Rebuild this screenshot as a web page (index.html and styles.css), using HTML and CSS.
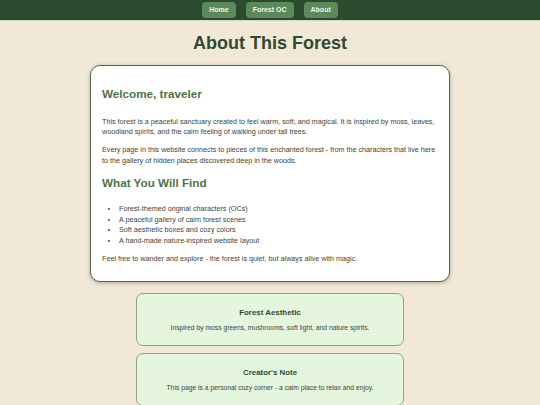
FILE: index.html
```html
<!DOCTYPE html>
<html lang="en">
<head>
<meta charset="utf-8">
<title>About This Forest</title>
<link rel="stylesheet" href="styles.css">
</head>
<body>
<nav class="topnav">
  <a class="navbtn" href="#">Home</a>
  <a class="navbtn" href="#">Forest OC</a>
  <a class="navbtn" href="#">About</a>
</nav>
<h1 class="page-title">About This Forest</h1>
<main class="main-card">
  <h2 class="section-title section-title-first">Welcome, traveler</h2>
  <p>This forest is a peaceful sanctuary created to feel warm, soft, and magical. It is inspired by moss, leaves, woodland spirits, and the calm feeling of walking under tall trees.</p>
  <p>Every page in this website connects to pieces of this enchanted forest - from the characters that live here to the gallery of hidden places discovered deep in the woods.</p>
  <h2 class="section-title">What You Will Find</h2>
  <ul class="find-list">
    <li>Forest-themed original characters (OCs)</li>
    <li>A peaceful gallery of calm forest scenes</li>
    <li>Soft aesthetic boxes and cozy colors</li>
    <li>A hand-made nature-inspired website layout</li>
  </ul>
  <p>Feel free to wander and explore - the forest is quiet, but always alive with magic.</p>
</main>
<section class="note-card">
  <h3 class="note-title">Forest Aesthetic</h3>
  <p>Inspired by moss greens, mushrooms, soft light, and nature spirits.</p>
</section>
<section class="note-card">
  <h3 class="note-title">Creator's Note</h3>
  <p>This page is a personal cozy corner - a calm place to relax and enjoy.</p>
</section>
</body>
</html>
```
FILE: styles.css
```css
* { box-sizing: border-box; }
html, body { margin: 0; padding: 0; }
body {
  background: #f2e8d8;
  font-family: "Liberation Sans", Arial, sans-serif;
  color: #3a453a;
}
.topnav {
  background: #2c4a2e;
  border-bottom: 1px solid #cfdcc0;
  height: 21px;
  display: flex;
  justify-content: center;
  align-items: flex-start;
  gap: 10px;
  padding-top: 2px;
}
.navbtn {
  display: block;
  background: #5b8a5a;
  color: #f4f4ec;
  text-decoration: none;
  font-weight: bold;
  font-size: 7px;
  line-height: 16px;
  height: 16px;
  padding: 0 7px;
  border-radius: 4px;
}
.page-title {
  text-align: center;
  color: #2e4a30;
  font-size: 18px;
  line-height: 1.2;
  margin: 12px 0 10px;
}
.main-card {
  display: block;
  width: 360px;
  margin: 0 auto;
  background: #ffffff;
  border: 1px solid #4e6a52;
  border-radius: 10px;
  box-shadow: 0 1px 4px rgba(60, 80, 50, 0.4);
  padding: 10px 10px 9px 11px;
  font-size: 7.2px;
  line-height: 10.8px;
}
.section-title {
  color: #4a7448;
  font-size: 11.7px;
  line-height: 14px;
  margin: 9.5px 0 13.5px;
}
.section-title-first { margin: 11.5px 0 15.5px; }
.main-card p { margin: 7px 0; }
.find-list {
  margin: 13.5px 0 7px;
  padding-left: 17px;
}
.note-card {
  width: 268px;
  margin: 11px auto 0;
  background: #e6f5de;
  border: 1px solid #86a97c;
  border-radius: 7px;
  padding: 6px 10px;
  text-align: center;
  font-size: 6.75px;
  line-height: 9.5px;
}
.note-card + .note-card { margin-top: 7px; }
.note-title {
  color: #2e4a30;
  font-size: 7.9px;
  line-height: 9.5px;
  margin: 8px 0 6px;
}
.note-card p { margin: 6px 0; }
```
